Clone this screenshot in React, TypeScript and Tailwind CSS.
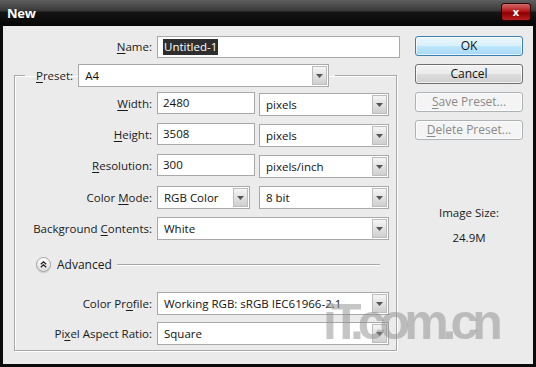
import React from "react";

const U = ({ c }: { c: string }) => <span className="underline underline-offset-[2px]">{c}</span>;

function Arrow() {
  return (
    <div className="my-[1px] mr-[1px] w-[15px] shrink-0 flex items-center justify-center border border-[#bcbcbc] bg-[linear-gradient(#f5f5f5,#cfcfcf)]">
      <svg width="7" height="4" viewBox="0 0 7 4">
        <path d="M0 0H7L3.5 4Z" fill="#555" />
      </svg>
    </div>
  );
}

function Select({ cls, value }: { cls: string; value: string }) {
  return (
    <div className={`flex h-[23px] border border-[#a9a9a9] bg-white ${cls}`}>
      <div className="flex-1 flex items-center pl-[6px] text-[#111] whitespace-nowrap overflow-hidden">{value}</div>
      <Arrow />
    </div>
  );
}

function Input({ value }: { value: string }) {
  return (
    <div className="flex h-[22px] w-[98px] items-center border border-[#a9a9a9] bg-white pl-[5px] text-[#111]">{value}</div>
  );
}

function Row({ label, children, cls = "" }: { label: React.ReactNode; children: React.ReactNode; cls?: string }) {
  return (
    <div className={`flex items-center ${cls}`}>
      <div className="w-[137px] text-right text-[#1a1a1a] whitespace-nowrap">{label}</div>
      <div className="ml-[5px] flex gap-[4px]">{children}</div>
    </div>
  );
}

function Btn({ children, kind }: { children: React.ReactNode; kind: "ok" | "normal" | "disabled" }) {
  const k =
    kind === "ok"
      ? "border-[#3c7fb1] bg-[linear-gradient(#eaf6fd_0%,#d9f0fc_50%,#bee6fd_51%,#a7d9f5_100%)] text-[#111]"
      : kind === "normal"
      ? "border-[#707070] bg-[linear-gradient(#f2f2f2_0%,#ebebeb_50%,#dddddd_51%,#cfcfcf_100%)] text-[#111]"
      : "border-[#adb2b5] bg-[#f4f4f4] text-[#8a8a8a]";
  return (
    <div className={`h-[20px] w-[108px] rounded-[3px] border flex items-center justify-center shadow-[inset_0_0_0_1px_rgba(255,255,255,0.7)] ${k}`}>
      {children}
    </div>
  );
}

export default function App() {
  return (
    <div className="w-[536px] h-[367px] bg-[#0c0c0c] flex flex-col font-['Open_Sans',sans-serif] text-[11.5px] leading-none relative overflow-hidden">
      {/* title bar */}
      <div className="h-[26px] shrink-0 flex items-center justify-between pl-[7px] pr-[5px] bg-[linear-gradient(to_bottom,#5e5e5e_0%,#3a3a3a_40%,#151515_48%,#050505_100%)]">
        <span className="text-white font-bold text-[13px] tracking-[-0.2px]">New</span>
        <div className="mb-[3px] h-[18px] w-[30px] rounded-[3px] border border-[#2a0000] bg-[linear-gradient(#d46a6a_0%,#b41818_45%,#8d0000_55%,#b82020_100%)] flex items-center justify-center">
          <span className="text-white font-bold text-[11px]">x</span>
        </div>
      </div>
      {/* body */}
      <div className="flex-1 mx-[3px] mb-[3px] bg-[#ebebeb] flex">
        {/* left */}
        <div className="w-[397px] pt-[10px] flex flex-col">
          <div className="flex items-center">
            <div className="w-[149px] text-right text-[#1a1a1a]">
              <U c="N" />ame:
            </div>
            <div className="ml-[5px] flex h-[22px] w-[243px] items-center border border-[#a9a9a9] bg-white pl-[5px]">
              <span className="bg-[#2e2e2e] text-white px-[1px] py-[2px]">Untitled-1</span>
            </div>
          </div>
          <fieldset className="mt-[6px] ml-[11px] w-[383px] h-[287px] border border-[#a8a8a8] shadow-[inset_1px_1px_0_#fff,1px_1px_0_#fff] px-0 pt-[5px] pb-0">
            <legend className="ml-[10px] px-[11px] pr-[6px]">
              <div className="flex items-center">
                <span className="text-[#1a1a1a]">
                  <U c="P" />reset:
                </span>
                <Select cls="ml-[5px] w-[251px] h-[22px]" value="A4" />
              </div>
            </legend>
            <div className="flex flex-col">
              <Row label={<><U c="W" />idth:</>}>
                <Input value="2480" />
                <Select cls="w-[130px] mt-[1px]" value="pixels" />
              </Row>
              <Row cls="mt-[7px]" label={<><U c="H" />eight:</>}>
                <Input value="3508" />
                <Select cls="w-[130px] mt-[1px]" value="pixels" />
              </Row>
              <Row cls="mt-[7px]" label={<><U c="R" />esolution:</>}>
                <Input value="300" />
                <Select cls="w-[130px] mt-[1px]" value="pixels/inch" />
              </Row>
              <Row cls="mt-[8px]" label={<>Color <U c="M" />ode:</>}>
                <Select cls="w-[93px] h-[22px]" value="RGB Color" />
                <Select cls="w-[130px] h-[22px] ml-[5px]" value="8 bit" />
              </Row>
              <Row cls="mt-[8px]" label={<>Background <U c="C" />ontents:</>}>
                <Select cls="w-[232px] h-[22px]" value="White" />
              </Row>
              <div className="mt-[17px] flex items-center pl-[21px] pr-[16px]">
                <div className="h-[15px] w-[15px] rounded-full border border-[#a3a3a3] bg-[linear-gradient(#ffffff,#dcdcdc)] flex items-center justify-center shadow-[0_1px_1px_rgba(0,0,0,0.15)]">
                  <svg width="7" height="7" viewBox="0 0 7 7">
                    <path d="M0.8 3.3L3.5 0.8L6.2 3.3M0.8 6.3L3.5 3.8L6.2 6.3" stroke="#222" strokeWidth="1.2" fill="none" />
                  </svg>
                </div>
                <span className="ml-[6px] text-[12px] text-[#1a1a1a]">Advanced</span>
                <div className="ml-[5px] flex-1 h-[2px] border-t border-[#a8a8a8] border-b-white border-b" />
              </div>
              <Row cls="mt-[20px]" label={<>Color Pr<U c="o" />file:</>}>
                <Select cls="w-[232px]" value="Working RGB:  sRGB IEC61966-2.1" />
              </Row>
              <Row cls="mt-[7px]" label={<>Pi<U c="x" />el Aspect Ratio:</>}>
                <Select cls="w-[232px]" value="Square" />
              </Row>
            </div>
          </fieldset>
        </div>
        {/* right */}
        <div className="flex-1 flex flex-col pl-[15px] pt-[10px]">
          <div className="flex flex-col gap-[8px] text-[12px]">
            <Btn kind="ok">OK</Btn>
            <Btn kind="normal">Cancel</Btn>
            <Btn kind="disabled">
              <U c="S" />ave Preset...
            </Btn>
            <Btn kind="disabled">
              <U c="D" />elete Preset...
            </Btn>
          </div>
          <div className="mt-[67px] w-[108px] flex flex-col items-center text-[#1a1a1a]">
            <span>Image Size:</span>
            <span className="mt-[13px]">24.9M</span>
          </div>
        </div>
      </div>
      {/* watermark */}
      <div className="pointer-events-none absolute left-[323px] top-[297px] font-['Liberation_Sans',sans-serif] font-black text-[50px] tracking-[-6px] text-[rgba(140,140,140,0.5)] leading-none">
        iT.com.cn
      </div>
    </div>
  );
}
